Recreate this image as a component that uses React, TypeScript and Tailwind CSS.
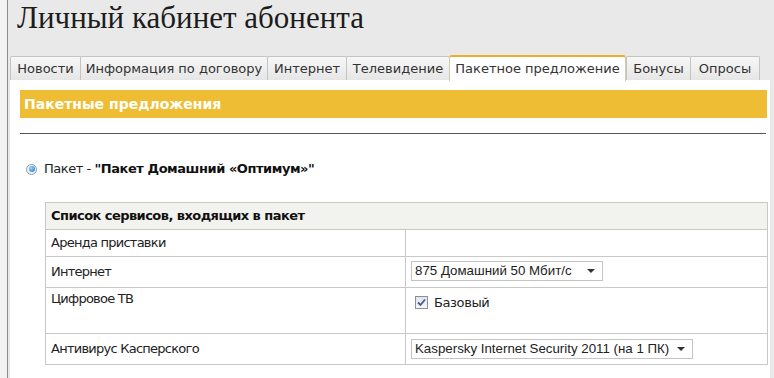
import React from "react";

const tabs = [
  { label: "Новости", w: 70 },
  { label: "Информация по договору", w: 187 },
  { label: "Интернет", w: 79 },
  { label: "Телевидение", w: 103 },
  { label: "Пакетное предложение", w: 177, active: true },
  { label: "Бонусы", w: 64 },
  { label: "Опросы", w: 69 },
];

function FakeSelect({ value, width }: { value: string; width: number }) {
  return (
    <div
      className="flex h-[20px] items-center justify-between border border-[#c4c4c4] bg-white pl-[3px] pr-[7px] font-['Liberation_Sans',Arial,sans-serif] text-[13.3px] tracking-normal text-[#222]"
      style={{ width }}
    >
      <span className="overflow-hidden whitespace-nowrap">{value}</span>
      <span className="ml-[4px] h-0 w-0 shrink-0 border-x-[4px] border-t-[4px] border-x-transparent border-t-[#333]" />
    </div>
  );
}

function Row({ label, h, children, top }: { label: string; h: string; children?: React.ReactNode; top?: boolean }) {
  return (
    <div className={`flex border-b border-[#c8c8c8] ${h}`}>
      <div
        className={`flex w-[360px] border-r border-[#c8c8c8] pl-[5px] ${top ? "items-start pt-[3px]" : "items-center"}`}
      >
        <span className="leading-[16px]">{label}</span>
      </div>
      <div className="flex-1">{children}</div>
    </div>
  );
}

export default function App() {
  return (
    <div className="h-[378px] w-[774px] overflow-hidden bg-[#f3f3f3] font-['DejaVu_Sans',Verdana,sans-serif] text-[13px] text-[#222]">
      <div className="ml-[7px] flex h-full flex-col border-l border-[#8c8c8c] bg-[#e9e9e9]">
        <h1 className="h-[56px] pl-[9px] pt-[1px] font-['Liberation_Serif',serif] text-[31px] leading-[34px] text-[#1c1c1c]">
          Личный кабинет абонента
        </h1>

        <div className="flex h-[24px] items-end pl-[2px]">
          {tabs.map((t) =>
            t.active ? (
              <div
                key={t.label}
                className="relative z-10 -mb-px flex h-[26px] items-center justify-center rounded-t-[3px] border-x border-t-2 border-x-[#d4c9a8] border-t-[#f0ad2c] bg-white text-[#333]"
                style={{ width: t.w }}
              >
                {t.label}
              </div>
            ) : (
              <div
                key={t.label}
                className="-mr-px flex h-[24px] items-center justify-center rounded-t-[2px] border border-b-0 border-[#c4c4c4] bg-gradient-to-b from-[#f7f7f7] to-[#e6e6e6] text-[#333]"
                style={{ width: t.w + 1 }}
              >
                {t.label}
              </div>
            )
          )}
        </div>

        <div className="ml-[2px] mr-[4px] flex-1 bg-white pl-[10px] pr-[3px] pt-[10px]">
          <div className="flex h-[28px] items-center bg-[#efbd33] pl-[4px] text-[14px] font-bold text-white">
            Пакетные предложения
          </div>
          <div className="mr-[1px] mt-[15px] h-px bg-[#555]" />

          <div className="mt-[27px] flex h-[16px] items-center pl-[6px] tracking-[-0.45px]">
            <span className="flex h-[11px] w-[11px] items-center justify-center rounded-full border border-[#8a9bb0] bg-[#eef2f6]">
              <span className="h-[6px] w-[6px] rounded-full bg-[radial-gradient(circle_at_35%_35%,#9ad6ff,#1a6fb8)]" />
            </span>
            <span className="ml-[7px] leading-[16px]">
              Пакет - <b className="text-[#111]">"Пакет Домашний «Оптимум»"</b>
            </span>
          </div>

          <div className="ml-[25px] mt-[25px] w-[723px] border border-[#c8c8c8] tracking-[-0.75px]">
            <div className="flex h-[27px] items-center border-b border-[#c8c8c8] bg-[#f2f2ee] pl-[5px] font-bold tracking-[-0.55px] text-[#111]">
              Список сервисов, входящих в пакет
            </div>
            <Row label="Аренда приставки" h="h-[27px]" />
            <Row label="Интернет" h="h-[31px]">
              <div className="pl-[5px] pt-[4px]">
                <FakeSelect value="875 Домашний 50 Мбит/с" width={192} />
              </div>
            </Row>
            <Row label="Цифровое ТВ" h="h-[46px]" top>
              <div className="flex items-center pl-[9px] pt-[8px]">
                <span className="flex h-[13px] w-[13px] items-center justify-center border border-[#8e8f8f] bg-gradient-to-b from-[#dfe5ec] to-[#f5f7fa]">
                  <svg width="9" height="9" viewBox="0 0 9 9">
                    <path d="M1 4.5 L3.5 7 L8 1.5" fill="none" stroke="#4a5a8c" strokeWidth="1.8" />
                  </svg>
                </span>
                <span className="ml-[6px] leading-[13px] tracking-[-0.4px]">Базовый</span>
              </div>
            </Row>
            <div className="flex h-[30px]">
              <div className="flex w-[360px] items-center border-r border-[#c8c8c8] pl-[5px]">
                <span className="leading-[16px]">Антивирус Касперского</span>
              </div>
              <div className="flex-1 pl-[5px] pt-[5px]">
                <FakeSelect value="Kaspersky Internet Security 2011 (на 1 ПК)" width={282} />
              </div>
            </div>
          </div>
        </div>
      </div>
    </div>
  );
}
